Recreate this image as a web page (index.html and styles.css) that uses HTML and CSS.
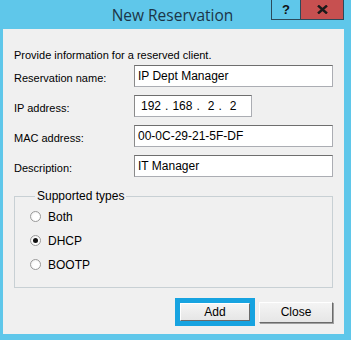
FILE: index.html
```html
<!DOCTYPE html>
<html>
<head>
<meta charset="utf-8">
<link rel="stylesheet" href="styles.css">
</head>
<body>
<div class="window">
  <div class="titlebar">
    <div class="title">New Reservation</div>
    <div class="caption-buttons">
      <div class="cap-btn help">?</div>
      <div class="cap-btn close">
        <svg width="11" height="9" viewBox="0 0 11 9"><path d="M1 0.5 L10 8.5 M10 0.5 L1 8.5" stroke="#1a1a1a" stroke-width="2.4"/></svg>
      </div>
    </div>
  </div>
  <div class="client">
    <div class="intro">Provide information for a reserved client.</div>
    <div class="form">
      <div class="label">Reservation name:</div>
      <div class="field wide">IP Dept Manager</div>
      <div class="label">IP address:</div>
      <div class="field ip"><span>192</span><span>.</span><span>168</span><span>.</span><span>2</span><span>.</span><span>2</span></div>
      <div class="label">MAC address:</div>
      <div class="field wide">00-0C-29-21-5F-DF</div>
      <div class="label">Description:</div>
      <div class="field wide">IT Manager</div>
    </div>
    <fieldset class="group">
      <legend>Supported types</legend>
      <div class="radio"><span class="dot"></span>Both</div>
      <div class="radio"><span class="dot checked"></span>DHCP</div>
      <div class="radio"><span class="dot"></span>BOOTP</div>
    </fieldset>
    <div class="actions">
      <div class="focus-ring"><div class="btn">Add</div></div>
      <div class="btn">Close</div>
    </div>
  </div>
</div>
</body>
</html>
```
FILE: styles.css
```css
html, body {
  margin: 0;
  padding: 0;
}
body {
  width: 351px;
  height: 340px;
  background: #5fc7ea;
  font-family: "Liberation Sans", Arial, sans-serif;
  font-size: 11px;
  color: #000;
  overflow: hidden;
}
.window {
  display: flex;
  flex-direction: column;
  height: 340px;
}
.titlebar {
  height: 29px;
  display: flex;
  align-items: flex-start;
  flex-shrink: 0;
}
.title {
  flex: 1;
  text-align: center;
  padding-left: 74px;
  padding-top: 4px;
  font-family: "Open Sans", "Noto Sans", sans-serif;
  font-size: 15.5px;
  color: #1b3547;
}
.caption-buttons {
  display: flex;
  margin-right: 7px;
}
.cap-btn {
  height: 19px;
  border: 1px solid #2b4a5b;
  border-top: none;
  display: flex;
  align-items: center;
  justify-content: center;
  box-sizing: content-box;
}
.help {
  width: 28px;
  border-right: none;
  background: #5fc7ea;
  font-family: "Liberation Sans", Arial, sans-serif;
  font-weight: bold;
  font-size: 13px;
  color: #111;
}
.close {
  width: 42px;
  background: #c75050;
}
.client {
  flex: 1;
  background: #f0f0f0;
  margin: 0 7px 6px 3px;
  padding: 20px 11px 0 11px;
  display: flex;
  flex-direction: column;
}
.intro {
  line-height: 13px;
}
.form {
  margin-top: 3px;
  display: grid;
  grid-template-columns: 120px 1fr;
  row-gap: 8px;
  align-items: center;
}
.label {
  padding-top: 3px;
}
.field {
  box-sizing: border-box;
  height: 22px;
  background: #fff;
  border: 1px solid #abadb3;
  border-top-color: #6e6e6e;
  border-left-color: #8a8a8a;
  padding: 3px 2px 0 3px;
  line-height: 14px;
  font-size: 12px;
}
.field.ip {
  width: 118px;
  display: flex;
  gap: 4px;
  padding-left: 6px;
}
.field.ip span:nth-child(5), .field.ip span:nth-child(7) {
  padding-left: 4px;
}
.group {
  margin: 12px 0 0 0;
  padding: 6px 0 15px 15px;
  border: 1px solid #c8d0d4;
  display: flex;
  flex-direction: column;
  gap: 9px;
}
.group legend {
  padding: 0 2px;
  margin-left: 5px;
  font-size: 12px;
}
.radio {
  display: flex;
  align-items: center;
  gap: 7px;
  font-size: 12px;
  height: 15px;
}
.dot {
  width: 11px;
  height: 11px;
  border-radius: 50%;
  box-sizing: border-box;
  border: 1px solid #9a9a9a;
  background: radial-gradient(circle at 60% 60%, #ffffff 40%, #e8e8e8 100%);
  display: flex;
  align-items: center;
  justify-content: center;
}
.dot.checked::after {
  content: "";
  width: 5px;
  height: 5px;
  border-radius: 50%;
  background: #111;
}
.actions {
  margin-top: 10px;
  display: flex;
  justify-content: flex-end;
  align-items: center;
  gap: 4px;
}
.focus-ring {
  border: 5px solid #17a3e0;
  display: flex;
}
.btn {
  width: 74px;
  height: 21px;
  box-sizing: border-box;
  display: flex;
  align-items: center;
  justify-content: center;
  font-size: 12px;
  background: linear-gradient(#f4f4f4, #e6e6e6);
  border: 1px solid #fff;
  border-right-color: #6b6b6b;
  border-bottom-color: #6b6b6b;
  box-shadow: 1px 1px 0 #a0a0a0;
}
.focus-ring .btn {
  width: 70px;
  height: 18px;
  box-shadow: none;
}
```
